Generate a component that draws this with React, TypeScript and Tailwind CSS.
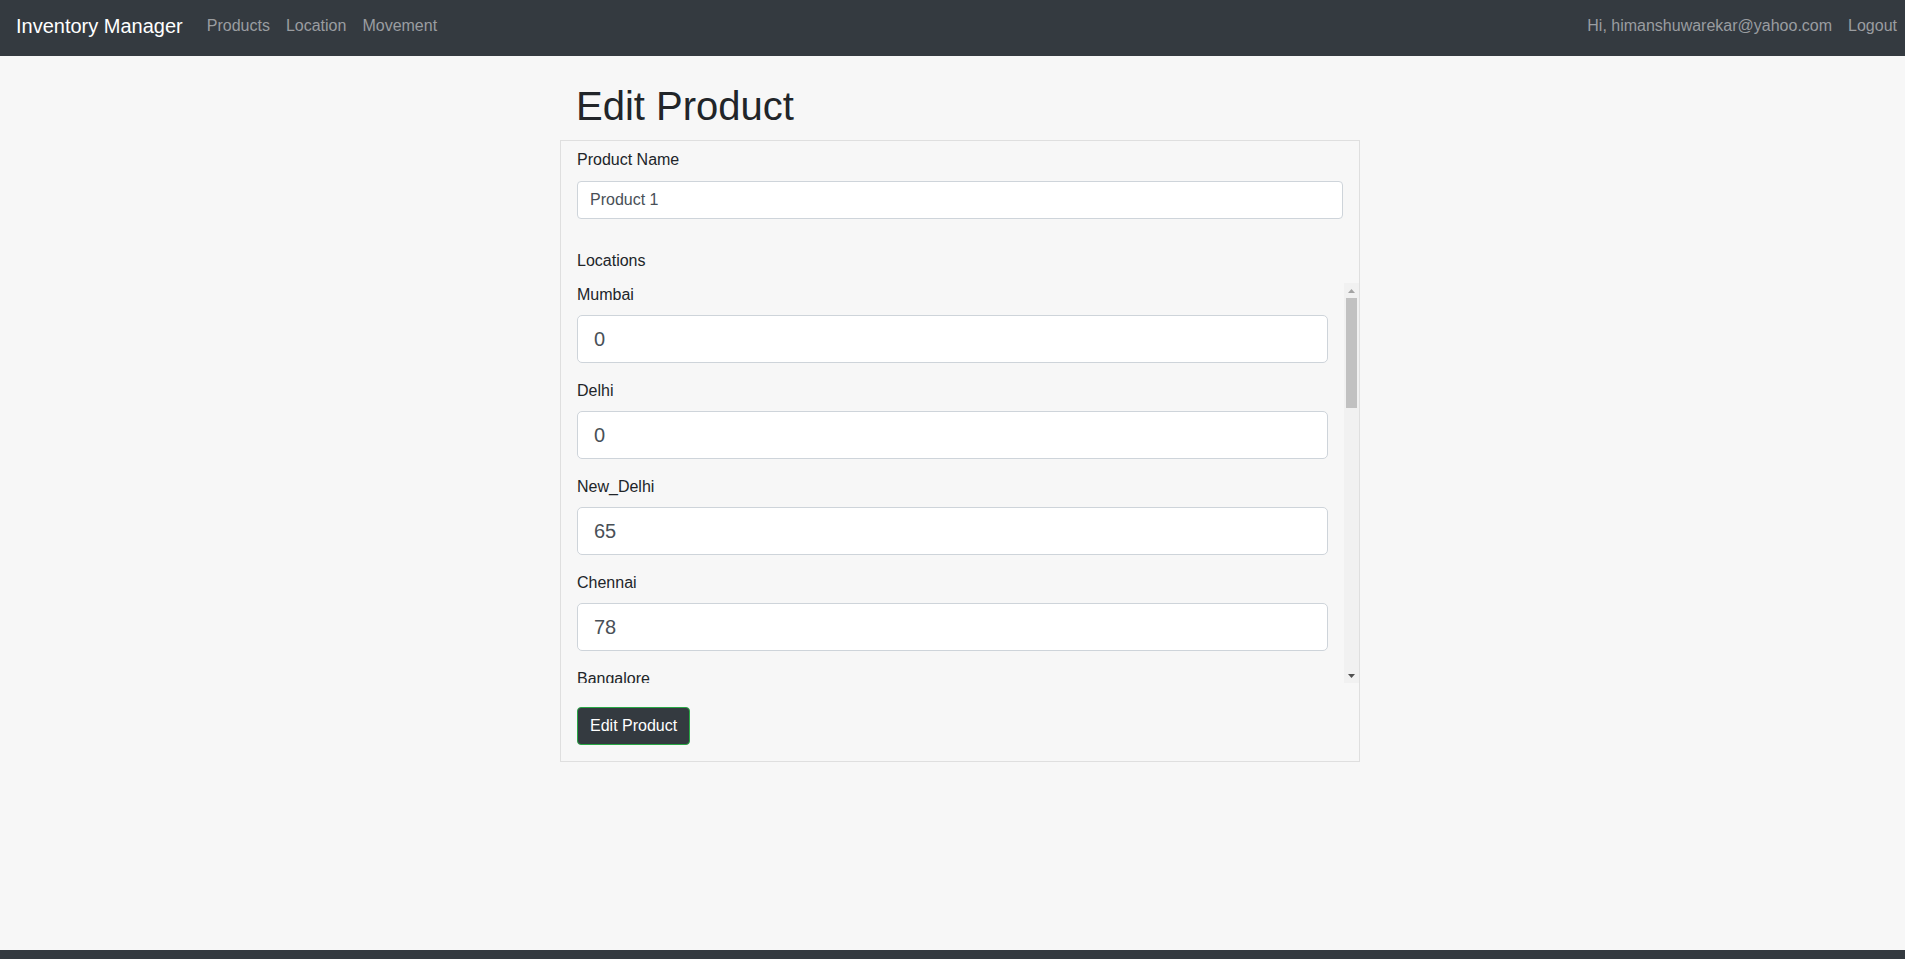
import React from "react";

interface StockRow {
  name: string;
  qty: number;
}

const locations: StockRow[] = [
  { name: "Mumbai", qty: 0 },
  { name: "Delhi", qty: 0 },
  { name: "New_Delhi", qty: 65 },
  { name: "Chennai", qty: 78 },
  { name: "Bangalore", qty: 12 },
  { name: "Kolkata", qty: 0 },
  { name: "Pune", qty: 34 },
  { name: "Hyderabad", qty: 0 },
  { name: "Ahmedabad", qty: 20 },
  { name: "Jaipur", qty: 0 },
  { name: "Surat", qty: 5 },
  { name: "Lucknow", qty: 0 },
  { name: "Nagpur", qty: 9 },
  { name: "Indore", qty: 0 },
];

// classic scrollbar look for the locations list
function ScrollRail() {
  return (
    <div className="w-[15px] shrink-0 bg-[#f1f1f1] flex flex-col items-center">
      <div className="h-[15px] flex items-center justify-center">
        <svg width="7" height="4" viewBox="0 0 7 4">
          <path d="M0 4 L3.5 0 L7 4 Z" fill="#a3a3a3" />
        </svg>
      </div>
      <div className="w-[11px] h-[110px] bg-[#c1c1c1]" />
      <div className="flex-1" />
      <div className="h-[15px] flex items-center justify-center">
        <svg width="7" height="4" viewBox="0 0 7 4">
          <path d="M0 0 L7 0 L3.5 4 Z" fill="#505050" />
        </svg>
      </div>
    </div>
  );
}

export default function App() {
  return (
    <div className="h-[959px] overflow-hidden flex flex-col bg-[#f7f7f7] text-[#212529] font-['Liberation_Sans',Arial,sans-serif]">
      {/* Navbar */}
      <nav className="h-14 shrink-0 bg-[#343a40] flex items-center pl-4 pr-2 pb-[4px]">
        <a className="text-xl leading-[30px] text-white mr-4">Inventory Manager</a>
        <ul className="flex text-base leading-6 text-[#9a9da0]">
          <li className="px-2">Products</li>
          <li className="px-2">Location</li>
          <li className="px-2">Movement</li>
        </ul>
        <ul className="ml-auto flex text-base leading-6 text-[#9a9da0]">
          <li className="px-2">Hi, himanshuwarekar@yahoo.com</li>
          <li className="pl-2">Logout</li>
        </ul>
      </nav>

      {/* Content */}
      <main className="flex-1 pl-[560px] pt-[26px]">
        <h1 className="text-[40px] leading-[48px] pl-4 mb-[10px]">Edit Product</h1>
        <form className="w-[800px] border border-[#dfdfdf] px-4 pt-[7px] pb-4">
          <div className="mb-[30px]">
            <label className="block text-base leading-6 mb-[9px]">Product Name</label>
            <input
              type="text"
              defaultValue="Product 1"
              className="block w-full h-[38px] px-3 text-base bg-white border border-[#ced4da] rounded-[4px] text-[#495057] outline-none"
            />
          </div>

          <label className="block text-base leading-6 mb-[10px]">Locations</label>
          <div className="flex h-[400px] -mr-4">
            <div className="flex-1 overflow-hidden pr-4">
              {locations.map((loc) => (
                <div key={loc.name} className="mb-4">
                  <label className="block text-base leading-6 mb-2">{loc.name}</label>
                  <input
                    type="text"
                    defaultValue={loc.qty}
                    className="block w-full h-12 px-4 text-xl bg-white border border-[#ced4da] rounded-[5px] text-[#495057] outline-none"
                  />
                </div>
              ))}
            </div>
            <ScrollRail />
          </div>

          <button
            type="button"
            className="mt-6 h-[38px] px-3 text-base text-white bg-[#343a40] border border-[#28a745] rounded-[4px]"
          >
            Edit Product
          </button>
        </form>
      </main>

      {/* Footer strip */}
      <footer className="h-[9px] shrink-0 bg-[#343a40]" />
    </div>
  );
}
